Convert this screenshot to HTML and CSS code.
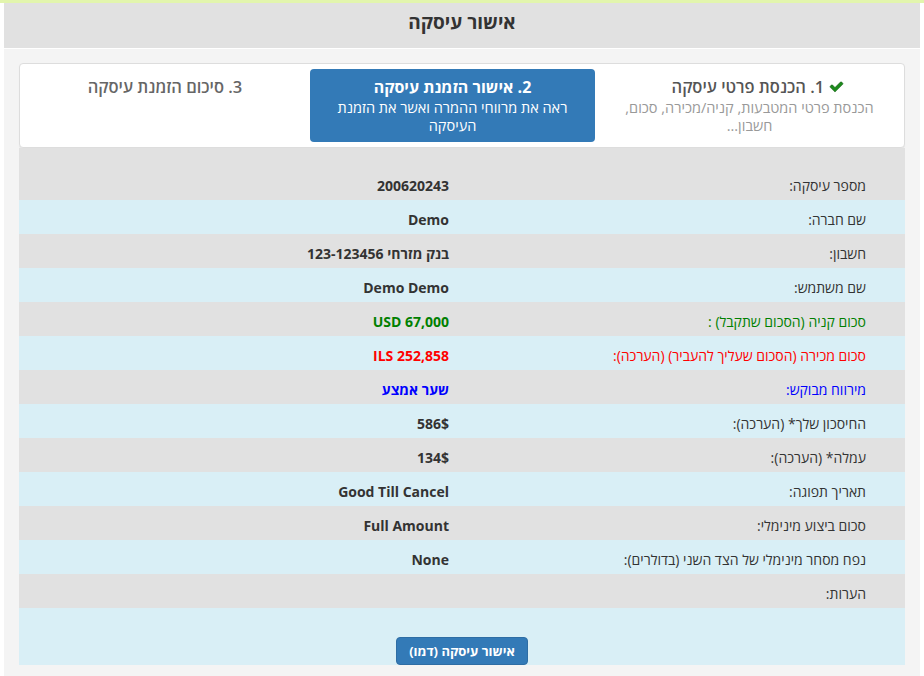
FILE: index.html
```html
<!DOCTYPE html>
<html lang="he" dir="rtl">
<head>
<meta charset="utf-8">
<title>אישור עיסקה</title>
<link rel="stylesheet" href="styles.css">
</head>
<body>
<div class="topbar"></div>
<div class="page">
  <div class="header"><h1 class="title">אישור עיסקה</h1></div>
  <div class="panel">
    <div class="steps">
      <div class="step step-done">
        <div class="step-title"><svg class="check" viewBox="0 0 1792 1792" width="17" height="15"><path d="M1671 566q0 40-28 68l-724 724-136 136q-28 28-68 28t-68-28l-136-136-362-362q-28-28-28-68t28-68l136-136q28-28 68-28t68 28l294 295 656-657q28-28 68-28t68 28l136 136q28 28 28 68z"/></svg> 1. הכנסת פרטי עיסקה</div>
        <div class="step-desc">הכנסת פרטי המטבעות, קניה/מכירה, סכום, חשבון...</div>
      </div>
      <div class="step step-active">
        <div class="step-title">2. אישור הזמנת עיסקה</div>
        <div class="step-desc">ראה את מרווחי ההמרה ואשר את הזמנת העיסקה</div>
      </div>
      <div class="step step-next">
        <div class="step-title">3. סיכום הזמנת עיסקה</div>
      </div>
    </div>
    <div class="details">
      <div class="row"><div class="label">מספר עיסקה:</div><div class="value">200620243</div></div>
      <div class="row"><div class="label">שם חברה:</div><div class="value">Demo</div></div>
      <div class="row"><div class="label">חשבון:</div><div class="value">בנק מזרחי 123-123456</div></div>
      <div class="row"><div class="label">שם משתמש:</div><div class="value">Demo Demo</div></div>
      <div class="row green"><div class="label">סכום קניה (הסכום שתקבל) :</div><div class="value" dir="ltr">USD 67,000</div></div>
      <div class="row red"><div class="label">סכום מכירה (הסכום שעליך להעביר) (הערכה):</div><div class="value" dir="ltr">ILS 252,858</div></div>
      <div class="row blue"><div class="label">מירווח מבוקש:</div><div class="value">שער אמצע</div></div>
      <div class="row"><div class="label">החיסכון שלך* (הערכה):</div><div class="value">586$</div></div>
      <div class="row"><div class="label">עמלה* (הערכה):</div><div class="value">134$</div></div>
      <div class="row"><div class="label">תאריך תפוגה:</div><div class="value" dir="ltr">Good Till Cancel</div></div>
      <div class="row"><div class="label">סכום ביצוע מינימלי:</div><div class="value" dir="ltr">Full Amount</div></div>
      <div class="row"><div class="label">נפח מסחר מינימלי של הצד השני (בדולרים):</div><div class="value" dir="ltr">None</div></div>
      <div class="row"><div class="label">הערות:</div><div class="value"></div></div>
      <div class="row button-row"><button class="btn" type="button">אישור עיסקה (דמו)</button></div>
    </div>
  </div>
</div>
</body>
</html>
```
FILE: styles.css
```css
html, body {
  margin: 0;
  padding: 0;
  background: #ffffff;
  font-family: "Open Sans", "DejaVu Sans", sans-serif;
  color: #333333;
}
.topbar {
  height: 3px;
  background: #e2f5ad;
}
.page {
  margin: 0 4px;
}
.header {
  height: 45px;
  background: #e1e1e1;
  border-bottom: 1px solid #ffffff;
  display: flex;
  align-items: center;
  justify-content: center;
}
.title {
  margin: 0;
  font-size: 19px;
  font-weight: 700;
  color: #333333;
  line-height: 24px;
  padding-bottom: 8px;
}
.panel {
  background: #f4f4f4;
  padding: 14px 15px 11px 15px;
}
.steps {
  background: #ffffff;
  border: 1px solid #dddddd;
  border-radius: 4px;
  box-shadow: 0 1px 1px rgba(0,0,0,0.05);
  height: 73px;
  padding: 5px;
  display: grid;
  grid-template-columns: 299px 285px 1fr;
  gap: 5px;
}
.step {
  border-radius: 4px;
  text-align: center;
  padding: 7px 8px 0 8px;
}
.step-title {
  font-size: 16.5px;
  line-height: 22px;
  font-weight: 600;
  color: #555555;
}
.step-desc {
  font-size: 14.5px;
  line-height: 18px;
  margin-top: 1px;
  color: #999999;
}
.step-done .step-title {
  padding-left: 18px;
}
.step-done .step-desc {
  padding: 0 4px;
}
.check {
  fill: #1c8a1c;
  stroke: #0b4f0b;
  stroke-width: 60;
  vertical-align: -1px;
}
.step-active {
  background: #337ab7;
}
.step-active .step-title {
  color: #ffffff;
  font-size: 16px;
  font-weight: 700;
}
.step-active .step-desc {
  color: #ffffff;
  padding: 0 4px;
}
.step-next .step-title {
  color: #666666;
}
.details {
  background: #e1e1e1;
  padding-top: 18px;
}
.row {
  display: grid;
  grid-template-columns: 1fr 1fr;
  height: 34px;
  box-sizing: border-box;
  padding-top: 8px;
  font-size: 14px;
  line-height: 24px;
}
.row:nth-child(odd) {
  background: #e1e1e1;
}
.row:nth-child(even) {
  background: #d9eff6;
}
.label {
  padding-right: 39px;
  text-align: right;
}
.value {
  padding-right: 13px;
  font-weight: 700;
  display: flex;
  justify-content: flex-start;
}
.value[dir="ltr"] {
  justify-content: flex-end;
  padding-right: 13px;
}
.green { color: #008000; }
.red { color: #ff0000; }
.blue { color: #0000ff; }
.button-row {
  height: 57px;
  padding-top: 29px;
  display: flex;
  justify-content: center;
  align-items: flex-start;
}
.btn {
  height: 28px;
  padding: 0 12px;
  background: #337ab7;
  border: 1px solid #2e6da4;
  border-radius: 4px;
  color: #ffffff;
  font-family: "Open Sans", "DejaVu Sans", sans-serif;
  font-size: 13px;
  font-weight: 700;
  line-height: 26px;
  white-space: nowrap;
}
```
